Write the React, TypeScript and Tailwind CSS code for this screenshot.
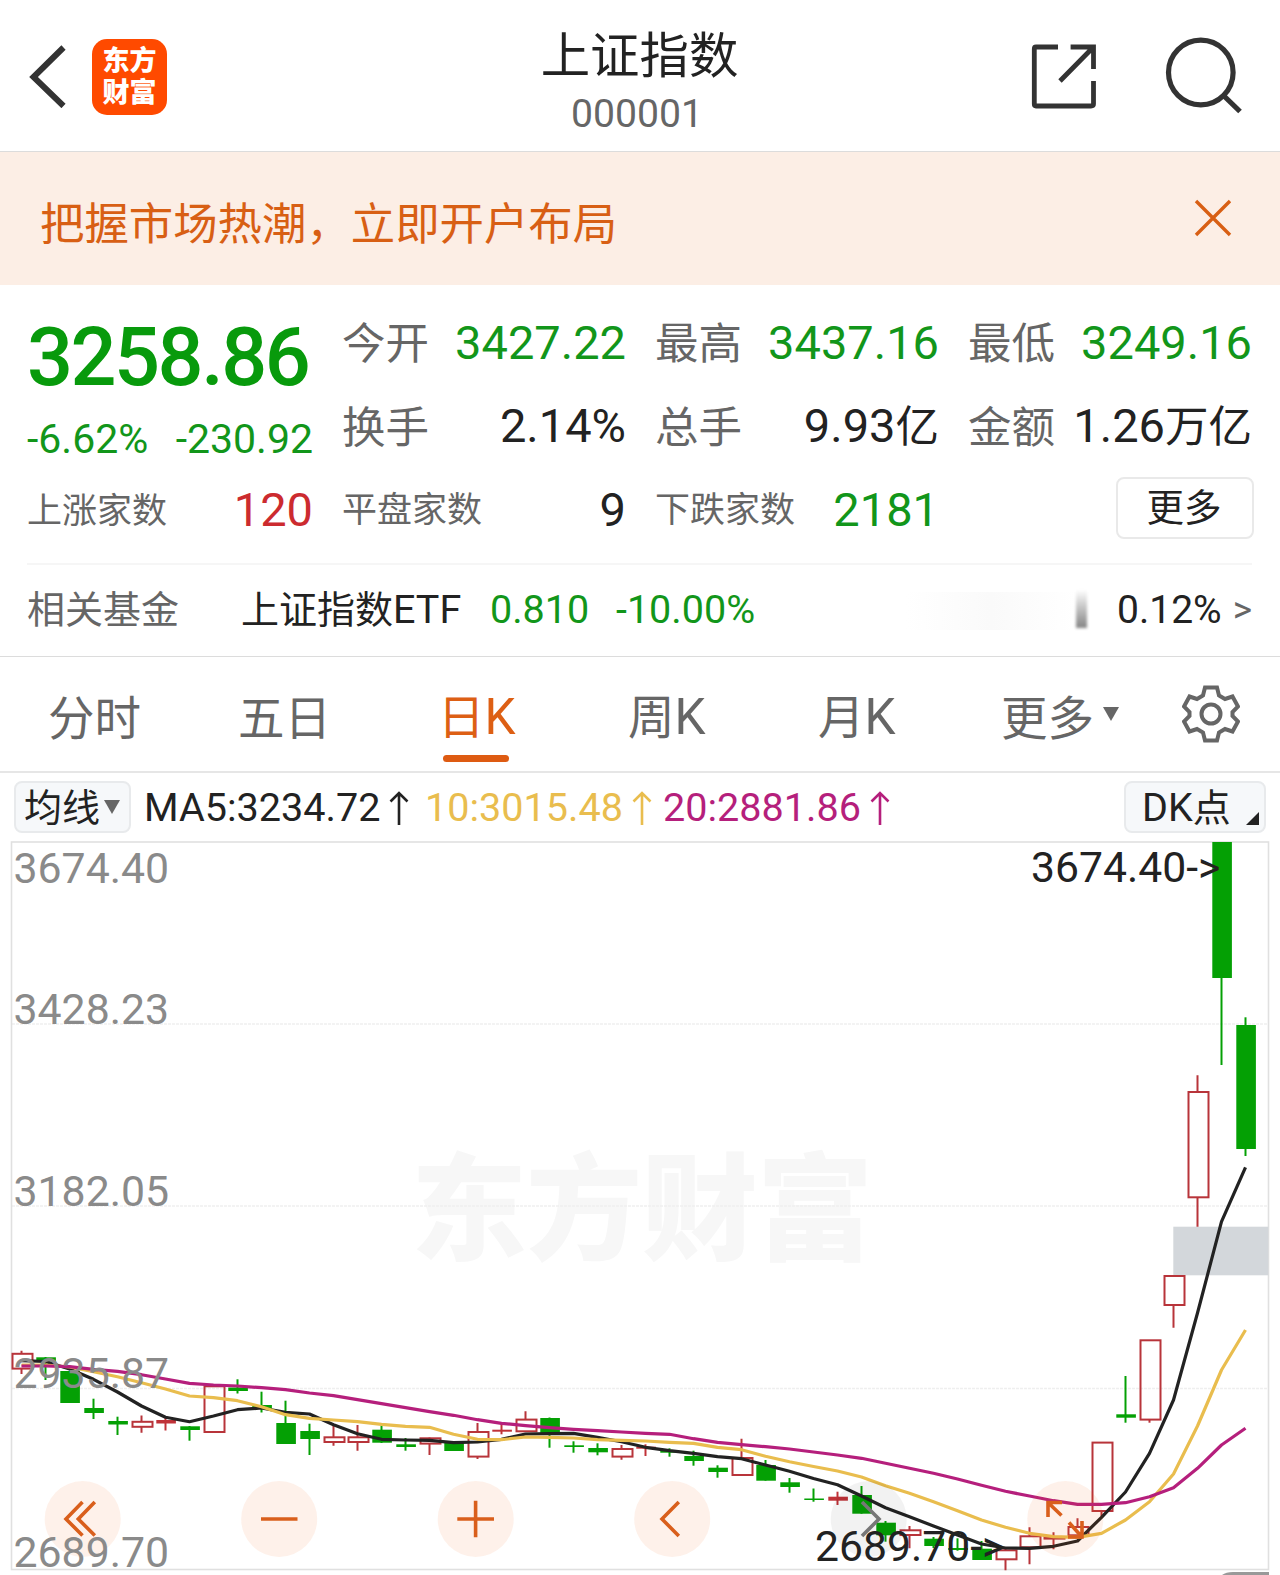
import type { ReactNode } from "react";

type Kind = "up" | "down" | "flat";

// kind, body top, body bottom, wick top, wick bottom
const CANDLES: [Kind, number, number, number, number][] = [
  ["up", 1353.5, 1368.3, 1350.7, 1374],
  ["down", 1357.3, 1361.5, 1357, 1380],
  ["down", 1371, 1403, 1371, 1403],
  ["down", 1408, 1413, 1398.7, 1419],
  ["down", 1421, 1424.5, 1416.7, 1435],
  ["up", 1421.5, 1426.5, 1415.5, 1432.7],
  ["flat", 1420, 1423.5, 1417.5, 1430.5],
  ["down", 1426.3, 1430, 1426, 1440.7],
  ["up", 1386, 1431.7, 1386, 1431.7],
  ["down", 1387.5, 1391, 1379.3, 1393.5],
  ["down", 1405, 1408.5, 1391.7, 1412.5],
  ["down", 1423, 1444, 1400.7, 1444],
  ["down", 1431, 1439, 1423.7, 1455],
  ["up", 1437, 1441.7, 1425, 1445.7],
  ["up", 1437, 1441.7, 1425, 1450.7],
  ["down", 1429.7, 1442.7, 1425.5, 1443],
  ["down", 1444.3, 1447, 1438, 1450.7],
  ["up", 1438, 1443.3, 1437.5, 1455],
  ["down", 1441.7, 1451, 1441.7, 1451],
  ["up", 1431.7, 1456.3, 1423, 1459],
  ["flat", 1429.7, 1431.7, 1423.3, 1434.3],
  ["up", 1419.3, 1431, 1411.3, 1432],
  ["down", 1418, 1434.3, 1417.5, 1447.7],
  ["down", 1445.3, 1447, 1441.3, 1452.7],
  ["down", 1448, 1452.3, 1443.3, 1455.3],
  ["up", 1448.7, 1456.3, 1445, 1459.7],
  ["flat", 1446.7, 1448.7, 1444.3, 1456],
  ["down", 1451, 1452.7, 1448.3, 1456.7],
  ["down", 1456, 1461, 1450.7, 1465.7],
  ["down", 1467.7, 1472, 1465.3, 1477.7],
  ["up", 1457.7, 1474.7, 1438.7, 1476],
  ["down", 1465, 1480.7, 1460, 1480.7],
  ["down", 1482.3, 1487, 1478, 1492.7],
  ["down", 1498.5, 1500, 1488.5, 1501.7],
  ["flat", 1496.7, 1500.7, 1491.7, 1505],
  ["down", 1495, 1513.7, 1486, 1513.7],
  ["down", 1522.7, 1535.3, 1521, 1541.7],
  ["up", 1530, 1534.7, 1526, 1548.3],
  ["down", 1538.7, 1546, 1537, 1548],
  ["down", 1548, 1550, 1538.3, 1550.7],
  ["down", 1548.7, 1560, 1541, 1560],
  ["up", 1550, 1559, 1549, 1570.3],
  ["up", 1536, 1547, 1527.3, 1564.3],
  ["up", 1536.7, 1538.3, 1532.3, 1549.3],
  ["up", 1526.7, 1535, 1518.3, 1536],
  ["up", 1442.3, 1510.7, 1442, 1516.7],
  ["down", 1414.3, 1417.7, 1376, 1422.7],
  ["up", 1340, 1419.3, 1340, 1422.7],
  ["up", 1275.7, 1304.7, 1275, 1327.7],
  ["up", 1091.7, 1197, 1075.3, 1226.7],
  ["down", 842, 978, 842, 1065],
  ["down", 1025, 1149, 1017.3, 1156],
];

const MA5 = [
  1360.7, 1361.5, 1369, 1379.3, 1392, 1406, 1417.3, 1421.7, 1416, 1409.7, 1408, 1412.3, 1414, 1424.7, 1433.7, 1439.3,
  1440, 1440.3, 1442.7, 1442, 1439.3, 1434, 1433.7, 1433.3, 1437.3, 1441.7, 1447.3, 1450.7, 1453.3, 1456.7, 1458.7,
  1465, 1471.3, 1478.5, 1484.7, 1496, 1507.7, 1516.7, 1526, 1535, 1544, 1548, 1548.3, 1546.3, 1541, 1517.3, 1492,
  1453.3, 1400, 1313, 1221.7, 1167.3,
];

const MA10 = [
  1365, 1365, 1367, 1371.7, 1376.7, 1382.7, 1389, 1396, 1397.7, 1400.7, 1406.7, 1414.7, 1418.3, 1420, 1421.7, 1424.3,
  1426.3, 1427.3, 1434.3, 1439.3, 1439.7, 1437, 1437.3, 1438, 1439.7, 1440.3, 1441, 1442.3, 1443.3, 1447.3, 1449.7,
  1456.3, 1461.7, 1466.5, 1471, 1477, 1485.7, 1493.3, 1501.7, 1510.7, 1520, 1527.3, 1533.3, 1536.7, 1537.3, 1533.3,
  1520, 1501.7, 1474, 1426, 1370, 1330,
];

const MA20 = [
  1366, 1366, 1366.7, 1369.3, 1371.3, 1374.7, 1379, 1383.3, 1385, 1386, 1387.7, 1389.7, 1393, 1395.7, 1399.7, 1403.7,
  1407.7, 1411.7, 1415.3, 1419.7, 1423.3, 1425.7, 1427.7, 1429.3, 1430.7, 1432, 1433.3, 1434.3, 1438.7, 1442.3, 1444.7,
  1446.7, 1449, 1452, 1455, 1458.3, 1463.3, 1468.3, 1473.3, 1479, 1485.3, 1491.3, 1496, 1500.7, 1504.3, 1504.3, 1502.7,
  1496.7, 1487.7, 1468.3, 1445, 1428.3,
];

const AXIS = [
  { y: 883, label: "3674.40" },
  { y: 1023.5, label: "3428.23" },
  { y: 1205.5, label: "3182.05" },
  { y: 1388, label: "2935.87" },
  { y: 1566.5, label: "2689.70" },
];

const cx = (i: number) => 21.5 + i * 24;
const line = (values: number[]) => values.map((y, i) => `${cx(i)},${y}`).join(" ");

function Candle({ i, data }: { i: number; data: (typeof CANDLES)[number] }) {
  const [kind, top, bottom, high, low] = data;
  const x = cx(i);
  const color = kind === "down" ? "#04a004" : "#c03238";
  if (kind === "up") {
    return (
      <g stroke="#b8343a" fill="none" strokeWidth="2">
        <path d={`M${x} ${high}V${top}M${x} ${bottom}V${low}`} />
        <rect x={x - 9} y={top + 0.3} width="20" height={Math.max(bottom - top, 1)} />
      </g>
    );
  }
  return (
    <g>
      <path d={`M${x} ${high}V${low}`} stroke={color} strokeWidth="2" />
      <rect x={x - 9.2} y={top} width="19.6" height={bottom - top} fill={color} />
    </g>
  );
}

function Chart() {
  return (
    <svg className="block w-full h-[735px]" viewBox="0 840 1280 735" fontFamily="Roboto, sans-serif">
      <text
        x="411"
        y="1251"
        fontSize="116"
        fontWeight="900"
        fill="#f7f7f7"
        fontFamily="'Noto Sans CJK SC', sans-serif"
        textLength="462"
      >
        东方财富
      </text>
      {[1024, 1206, 1388.5].map((y) => (
        <path key={y} d={`M12 ${y}H1268`} stroke="#efefef" strokeWidth="1.3" strokeDasharray="3 1" />
      ))}
      <rect x="11.5" y="842" width="1257" height="727.5" fill="none" stroke="#e0e0e0" strokeWidth="1.6" />
      <rect x="1173.3" y="1226.7" width="95" height="48.6" fill="#d3d7db" />

      {CANDLES.map((c, i) => (
        <Candle key={i} i={i} data={c} />
      ))}

      <g fill="none" strokeWidth="3.2" strokeLinejoin="round">
        <polyline points={line(MA5)} stroke="#222" />
        <polyline points={line(MA10)} stroke="#e9bd4e" />
        <polyline points={line(MA20)} stroke="#b51f7c" />
      </g>

      <g fill="#f96014" fillOpacity="0.09">
        <circle cx="82.7" cy="1519" r="38" />
        <circle cx="279.2" cy="1519" r="38" />
        <circle cx="475.7" cy="1519" r="38" />
        <circle cx="672.2" cy="1519" r="38" />
        <circle cx="1065.3" cy="1519" r="38" />
      </g>
      <circle cx="868.7" cy="1519" r="38" fill="#000" fillOpacity="0.05" />
      <g fill="none" stroke="#d95f1c" strokeWidth="3.6">
        <path d="M82.5 1502L66 1519L82.5 1535.5M94.8 1502L78.3 1519L94.8 1535.5" />
        <path d="M261 1519H297.5" />
        <path d="M457.3 1519H494M475.6 1500.7V1537.3" />
        <path d="M678.8 1502L662 1519L678.8 1536" />
        <path d="M862 1502L879 1519L862 1536" stroke="#777" />
        <path d="M1048 1517V1502.5H1062M1048 1502.5L1061.5 1515.5" />
        <path d="M1082 1521V1537H1068M1082 1537L1069 1522.5" />
      </g>

      <g fontSize="42.8" fill="#8a8a8a">
        {AXIS.map((a) => (
          <text key={a.label} x="13.5" y={a.y}>
            {a.label}
          </text>
        ))}
      </g>
      <g fontSize="42.7" fill="#222">
        <text x="1031" y="881.5">3674.40-&gt;</text>
        <text x="815" y="1560.5">2689.70-&gt;</text>
      </g>
      <path d="M1222 1575Q1226 1572 1233 1572H1269V1575Z" fill="#999" />
    </svg>
  );
}

function Header() {
  return (
    <header className="relative h-[152px] border-b border-[#dcdcdc] flex items-center justify-between pl-7 pr-[38px]">
      <div className="flex items-center gap-[25px]">
        <svg className="w-[39px] h-[64px]" viewBox="0 0 39 64" fill="none" stroke="#333" strokeWidth="6">
          <path d="M35.5 3.5L5.5 33L35.5 62" />
        </svg>
        <div className="w-[75px] h-[76px] mt-[2px] rounded-[15px] bg-[#ff4a00] text-white font-black text-[27px] leading-[32px] pt-[6px] text-center">
          东方
          <br />
          财富
        </div>
      </div>
      <div className="absolute left-1/2 -translate-x-1/2 ml-[-3px] top-0 flex flex-col items-center">
        <h1 className="mt-[30px] ml-[5px] text-[49.4px] leading-[52px] text-[#222] whitespace-nowrap">上证指数</h1>
        <p className="mt-[8px] text-[39.2px] leading-[48px] text-[#666]">000001</p>
      </div>
      <div className="flex items-center gap-[68px]">
        <svg className="w-[66px] h-[66px]" viewBox="1031 43 66 66" fill="none" stroke="#333" strokeWidth="4.8">
          <path d="M1058 47H1036Q1034.300 47 1034.300 49V104Q1034.300 106 1036 106H1091Q1093.500 106 1093.500 104V81" />
          <path d="M1070.600 47H1093.500V69M1093 47.500L1060 81" />
        </svg>
        <svg className="w-[77px] h-[77px]" viewBox="1165 37 77 77" fill="none" stroke="#333" strokeWidth="5.2">
          <circle cx="1200.8" cy="72.500" r="32.300" />
          <path d="M1223.500 95.500L1240 111.500" />
        </svg>
      </div>
    </header>
  );
}

function Banner() {
  return (
    <div className="h-[133px] bg-[#fceee5] flex items-center justify-between pl-10 pr-[48px] text-[#d85f14]">
      <span className="text-[44.4px] leading-none mt-[14px]">把握市场热潮，立即开户布局</span>
      <svg className="w-[38px] h-[38px] mb-px" viewBox="0 0 38 38" fill="none" stroke="currentColor" strokeWidth="3.4">
        <path d="M2 2L36 36M36 2L2 36" />
      </svg>
    </div>
  );
}

type StatProps = { label: string; value: string; unit?: string; tone?: string; small?: boolean };

function Stat({ label, value, unit, tone = "text-[#222]", small }: StatProps) {
  return (
    <div className="h-[83.3px] flex items-center justify-between whitespace-nowrap">
      <span className={small ? "mt-[3px] text-[35px] text-[#666]" : "mt-[5px] text-[43.5px] text-[#666]"}>{label}</span>
      <span className={`text-[47px] ${tone}`}>
        {value}
        {unit && <span className="text-[43.5px]">{unit}</span>}
      </span>
    </div>
  );
}

const GREEN = "text-[#12961a]";

function Quote() {
  return (
    <section className="h-[372px] border-b border-[#dcdcdc] pl-[27px] pr-7 leading-none">
      <div className="grid grid-cols-[286px_284px_284px_284px] gap-x-[29px] pt-[16px] h-[278px]">
        <div>
          <div className="h-[167px] text-[#089a0c]">
            <div className="h-[84px] pt-[17px] text-[81px] font-medium leading-[80px] tracking-[-2.5px]">3258.86</div>
            <div className="h-[83px] pt-[26px] flex justify-between items-center text-[41px] text-[#12961a]">
              <span>-6.62%</span>
              <span>-230.92</span>
            </div>
          </div>
          <Stat label="上涨家数" value="120" tone="text-[#cc2b2f]" small />
        </div>
        <div>
          <Stat label="今开" value="3427.22" tone={GREEN} />
          <Stat label="换手" value="2.14%" />
          <Stat label="平盘家数" value="9" small />
        </div>
        <div>
          <Stat label="最高" value="3437.16" tone={GREEN} />
          <Stat label="总手" value="9.93" unit="亿" />
          <Stat label="下跌家数" value="2181" tone={GREEN} small />
        </div>
        <div>
          <Stat label="最低" value="3249.16" tone={GREEN} />
          <Stat label="金额" value="1.26" unit="万亿" />
          <div className="h-[83px] flex items-center justify-end">
            <button className="w-[138px] h-[62px] -mr-[2px] mt-[-3px] pt-[3px] pr-[2px] border-2 border-[#e9e9e9] rounded-lg text-[37.5px] leading-none text-[#222]">
              更多
            </button>
          </div>
        </div>
      </div>
      <div className="h-[93px] border-t-2 border-[#f6f6f6] flex items-center whitespace-nowrap text-[38px]">
        <span className="w-[214px] -mt-px text-[#666]">相关基金</span>
        <span className="w-[249px] -mt-px text-[#222]">
          上证指数<span className="text-[39.5px]">ETF</span>
        </span>
        <span className={`w-[126px] -mt-[2px] text-[39.5px] ${GREEN}`}>0.810</span>
        <span className={`-mt-[2px] text-[39.5px] ${GREEN}`}>-10.00%</span>
        <div className="ml-auto flex items-center">
          <div className="w-[170px] h-[38px] bg-linear-to-r from-white via-[#fafafa] to-white" />
          <div className="w-[11px] h-[38px] mt-[-3px] mr-[30px] bg-linear-to-b from-white to-[#858585] blur-[1.5px]" />
          <span className="text-[39px] text-[#222]">0.12%</span>
          <span className="ml-[11px] mt-[-3px] text-[37px] text-[#666]">&gt;</span>
        </div>
      </div>
    </section>
  );
}

function Triangle({ className }: { className: string }) {
  return (
    <svg className={className} viewBox="0 0 16 14" fill="currentColor">
      <path d="M0 0H16L8 14Z" />
    </svg>
  );
}

function K() {
  return <span className="text-[49.5px]">K</span>;
}

function Tabs() {
  return (
    <nav className="h-[116px] border-b-2 border-[#e6e6e6] flex items-center text-[46.5px] leading-none text-[#666] whitespace-nowrap pl-[48px]">
      <span className="w-[190px] mt-[10px]">分时</span>
      <span className="w-[200px] mt-[10px]">五日</span>
      <span className="w-[190px] mt-[7px] relative text-[#dd5f14]">
        日<K />
        <i className="absolute left-[5px] top-[62px] w-[66px] h-[7.5px] rounded-full bg-[#de5b12]" />
      </span>
      <span className="w-[190px] mt-[7px]">
        周<K />
      </span>
      <span className="w-[183px] mt-[7px]">
        月<K />
      </span>
      <span className="mt-[10px]">更多</span>
      <Triangle className="w-[16px] h-[14px] ml-[9px]" />
      <svg className="w-[58px] h-[58px] ml-[63px]" viewBox="0 0 58 58" fill="none" stroke="#666" strokeWidth="4">
        <path d="M23 2.500H35L37 10.500L43 14L50.500 11.500L56 21.500L50.500 27V31L56 36.500L50.500 46.500L43 44L37 47.500L35 55.500H23L21 47.500L15 44L7.500 46.500L2 36.500L7.500 31V27L2 21.500L7.500 11.500L15 14L21 10.500Z" />
        <circle cx="29" cy="29" r="9.500" />
      </svg>
    </nav>
  );
}

function MaItem({ children, className }: { children: ReactNode; className: string }) {
  return (
    <span className={`flex items-center mt-[2px] ${className}`}>
      {children}
      <svg className="w-[20px] h-[36px] ml-[9px]" viewBox="0 0 20 36" fill="none" stroke="currentColor" strokeWidth="2.600">
        <path d="M10 35V3M1.500 11.500L10 3L18.500 11.500" />
      </svg>
    </span>
  );
}

function MaBar() {
  return (
    <div className="h-[67px] flex items-center pl-[14px] pr-[14px] text-[39.6px] leading-none whitespace-nowrap text-[#222]">
      <button className="w-[117px] h-[52px] flex items-center pl-[8px] border-2 border-[#e8eaec] rounded-lg bg-[#f6f8fa] text-[38px]">
        <span className="mt-[2px]">均线</span>
        <Triangle className="w-[16px] h-[14px] ml-[4px] text-[#666]" />
      </button>
      <MaItem className="ml-[13px] w-[281px]">MA5:3234.72</MaItem>
      <MaItem className="w-[238px] text-[#e9bd4e]">10:3015.48</MaItem>
      <MaItem className="text-[#b51f7c]">20:2881.86</MaItem>
      <button className="ml-auto w-[142px] h-[52px] flex items-center pl-[16px] border-2 border-[#e8eaec] rounded-lg bg-[#f6f8fa] text-[38px]">
        <span className="mt-[2px]">
          <span className="text-[39.5px]">DK</span>点
        </span>
        <svg className="w-[13px] h-[13px] ml-auto mr-[5px] mt-[24px]" viewBox="0 0 13 13" fill="#222">
          <path d="M13 0V13H0Z" />
        </svg>
      </button>
    </div>
  );
}

export default function App() {
  return (
    <div className="w-[1280px] h-[1575px] overflow-hidden bg-white font-[Roboto,'Noto_Sans_CJK_SC',sans-serif]">
      <Header />
      <Banner />
      <Quote />
      <Tabs />
      <MaBar />
      <Chart />
    </div>
  );
}
